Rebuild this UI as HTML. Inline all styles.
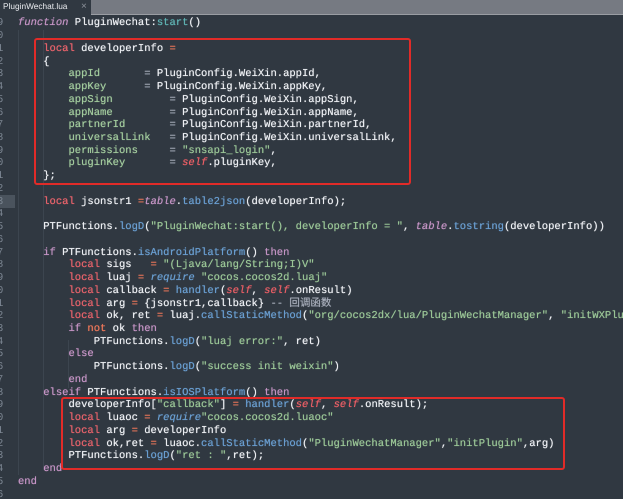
<!DOCTYPE html>
<html><head><meta charset="utf-8">
<style>
html,body{margin:0;padding:0;background:#303841;width:623px;height:499px;overflow:hidden}
body{position:relative;font-family:"DejaVu Sans Mono","Liberation Mono","Noto Sans CJK SC",monospace;text-rendering:geometricPrecision}
#bar{position:absolute;left:0;top:0;width:623px;height:14px;background:#767a82;border-bottom:1px solid #9a9da3}
#tab{position:absolute;left:0;top:0;width:91px;height:15px;background:#303841;color:#e8eaee;font:8.3px/13px "Liberation Sans",sans-serif}
#tab span{position:absolute;left:3px;top:0}
#tab i{position:absolute;left:81px;top:0;font-style:normal;color:#8a9099;font-size:10px}
#gut,#code{position:absolute;top:17.4px;margin:0;font-size:10.52px;line-height:12.74px;white-space:pre}
#gut{left:-3px;width:7px;color:#7c8692;overflow:hidden}
#code{left:18px;color:#eef0f4;width:605px;overflow:hidden;text-shadow:0 0 .6px currentColor}
#hl{position:absolute;left:0;top:195px;width:15px;height:13px;background:#4a535d}
.g{position:absolute;width:1px;background:#3c454f}
.box{position:absolute;border:2px solid #e12b28;border-radius:3px;box-sizing:border-box}
.k{color:#e8636b}.f{color:#c695c6;font-style:italic}.p{color:#c695c6}.s{color:#9bc797}.b{color:#6a9fd2}.t{color:#5fb4b4}
.o{color:#f0785a}.se{color:#ec5f66;font-style:italic}.bi{color:#6a9fd2;font-style:italic}.pi{color:#c695c6;font-style:italic}.c{color:#a6acb9}.v{color:#a3cc9e}
</style></head><body>
<div id="bar"></div>
<div id="tab"><span>PluginWechat.lua</span><i>×</i></div>
<div id="hl"></div>
<div class="g" style="left:18px;top:30px;height:445px"></div>
<div class="g" style="left:43px;top:30px;height:440px"></div>
<div class="g" style="left:68px;top:340px;height:48px"></div>
<pre id="gut">9
0
1
2
3
4
5
6
7
8
9
0
1
2
3
4
5
6
7
8
9
0
1
2
3
4
5
6
7
8
9
0
1
2
3
4
5
6</pre>
<pre id="code"><span class="f">function</span> PluginWechat:<span class="t">start</span>()

    <span class="k">local</span> developerInfo <span class="o">=</span>
    {
        <span class="v">appId</span>       <span class="c">=</span> PluginConfig.WeiXin.appId,
        <span class="v">appKey</span>      <span class="c">=</span> PluginConfig.WeiXin.appKey,
        <span class="v">appSign</span>         <span class="c">=</span> PluginConfig.WeiXin.appSign,
        <span class="v">appName</span>         <span class="c">=</span> PluginConfig.WeiXin.appName,
        <span class="v">partnerId</span>       <span class="c">=</span> PluginConfig.WeiXin.partnerId,
        <span class="v">universalLink</span>   <span class="c">=</span> PluginConfig.WeiXin.universalLink,
        <span class="v">permissions</span>     <span class="c">=</span> <span class="s">"snsapi_login"</span>,
        <span class="v">pluginKey</span>       <span class="c">=</span> <span class="se">self</span>.pluginKey,
    };

    <span class="k">local</span> jsonstr1 <span class="o">=</span><span class="pi">table</span>.<span class="b">table2json</span>(developerInfo);

    PTFunctions.<span class="b">logD</span>(<span class="s">"PluginWechat:start(), developerInfo = "</span>, <span class="pi">table</span>.<span class="b">tostring</span>(developerInfo))

    <span class="p">if</span> PTFunctions.<span class="b">isAndroidPlatform</span>() <span class="p">then</span>
        <span class="k">local</span> sigs   <span class="o">=</span> <span class="s">"(Ljava/lang/String;I)V"</span>
        <span class="k">local</span> luaj <span class="o">=</span> <span class="bi">require</span> <span class="s">"cocos.cocos2d.luaj"</span>
        <span class="k">local</span> callback <span class="o">=</span> <span class="b">handler</span>(<span class="se">self</span>, <span class="se">self</span>.onResult)
        <span class="k">local</span> arg <span class="o">=</span> {jsonstr1,callback} <span class="c">-- 回调函数</span>
        <span class="k">local</span> ok, ret <span class="o">=</span> luaj.<span class="b">callStaticMethod</span>(<span class="s">"org/cocos2dx/lua/PluginWechatManager"</span>, <span class="s">"initWXPlugin"</span>
        <span class="p">if</span> <span class="o">not</span> ok <span class="p">then</span>
            PTFunctions.<span class="b">logD</span>(<span class="s">"luaj error:"</span>, ret)
        <span class="p">else</span>
            PTFunctions.<span class="b">logD</span>(<span class="s">"success init weixin"</span>)
        <span class="p">end</span>
    <span class="p">elseif</span> PTFunctions.<span class="b">isIOSPlatform</span>() <span class="p">then</span>
        developerInfo[<span class="s">"callback"</span>] <span class="o">=</span> <span class="b">handler</span>(<span class="se">self</span>, <span class="se">self</span>.onResult);
        <span class="k">local</span> luaoc <span class="o">=</span> <span class="bi">require</span><span class="s">"cocos.cocos2d.luaoc"</span>
        <span class="k">local</span> arg <span class="o">=</span> developerInfo
        <span class="k">local</span> ok,ret <span class="o">=</span> luaoc.<span class="b">callStaticMethod</span>(<span class="s">"PluginWechatManager"</span>,<span class="s">"initPlugin"</span>,arg)
        PTFunctions.<span class="b">logD</span>(<span class="s">"ret : "</span>,ret);
    <span class="p">end</span>
<span class="p">end</span>
</pre>
<div class="box" style="left:34px;top:38px;width:377px;height:147px"></div>
<div class="box" style="left:61px;top:397px;width:504px;height:73px"></div>
</body></html>
